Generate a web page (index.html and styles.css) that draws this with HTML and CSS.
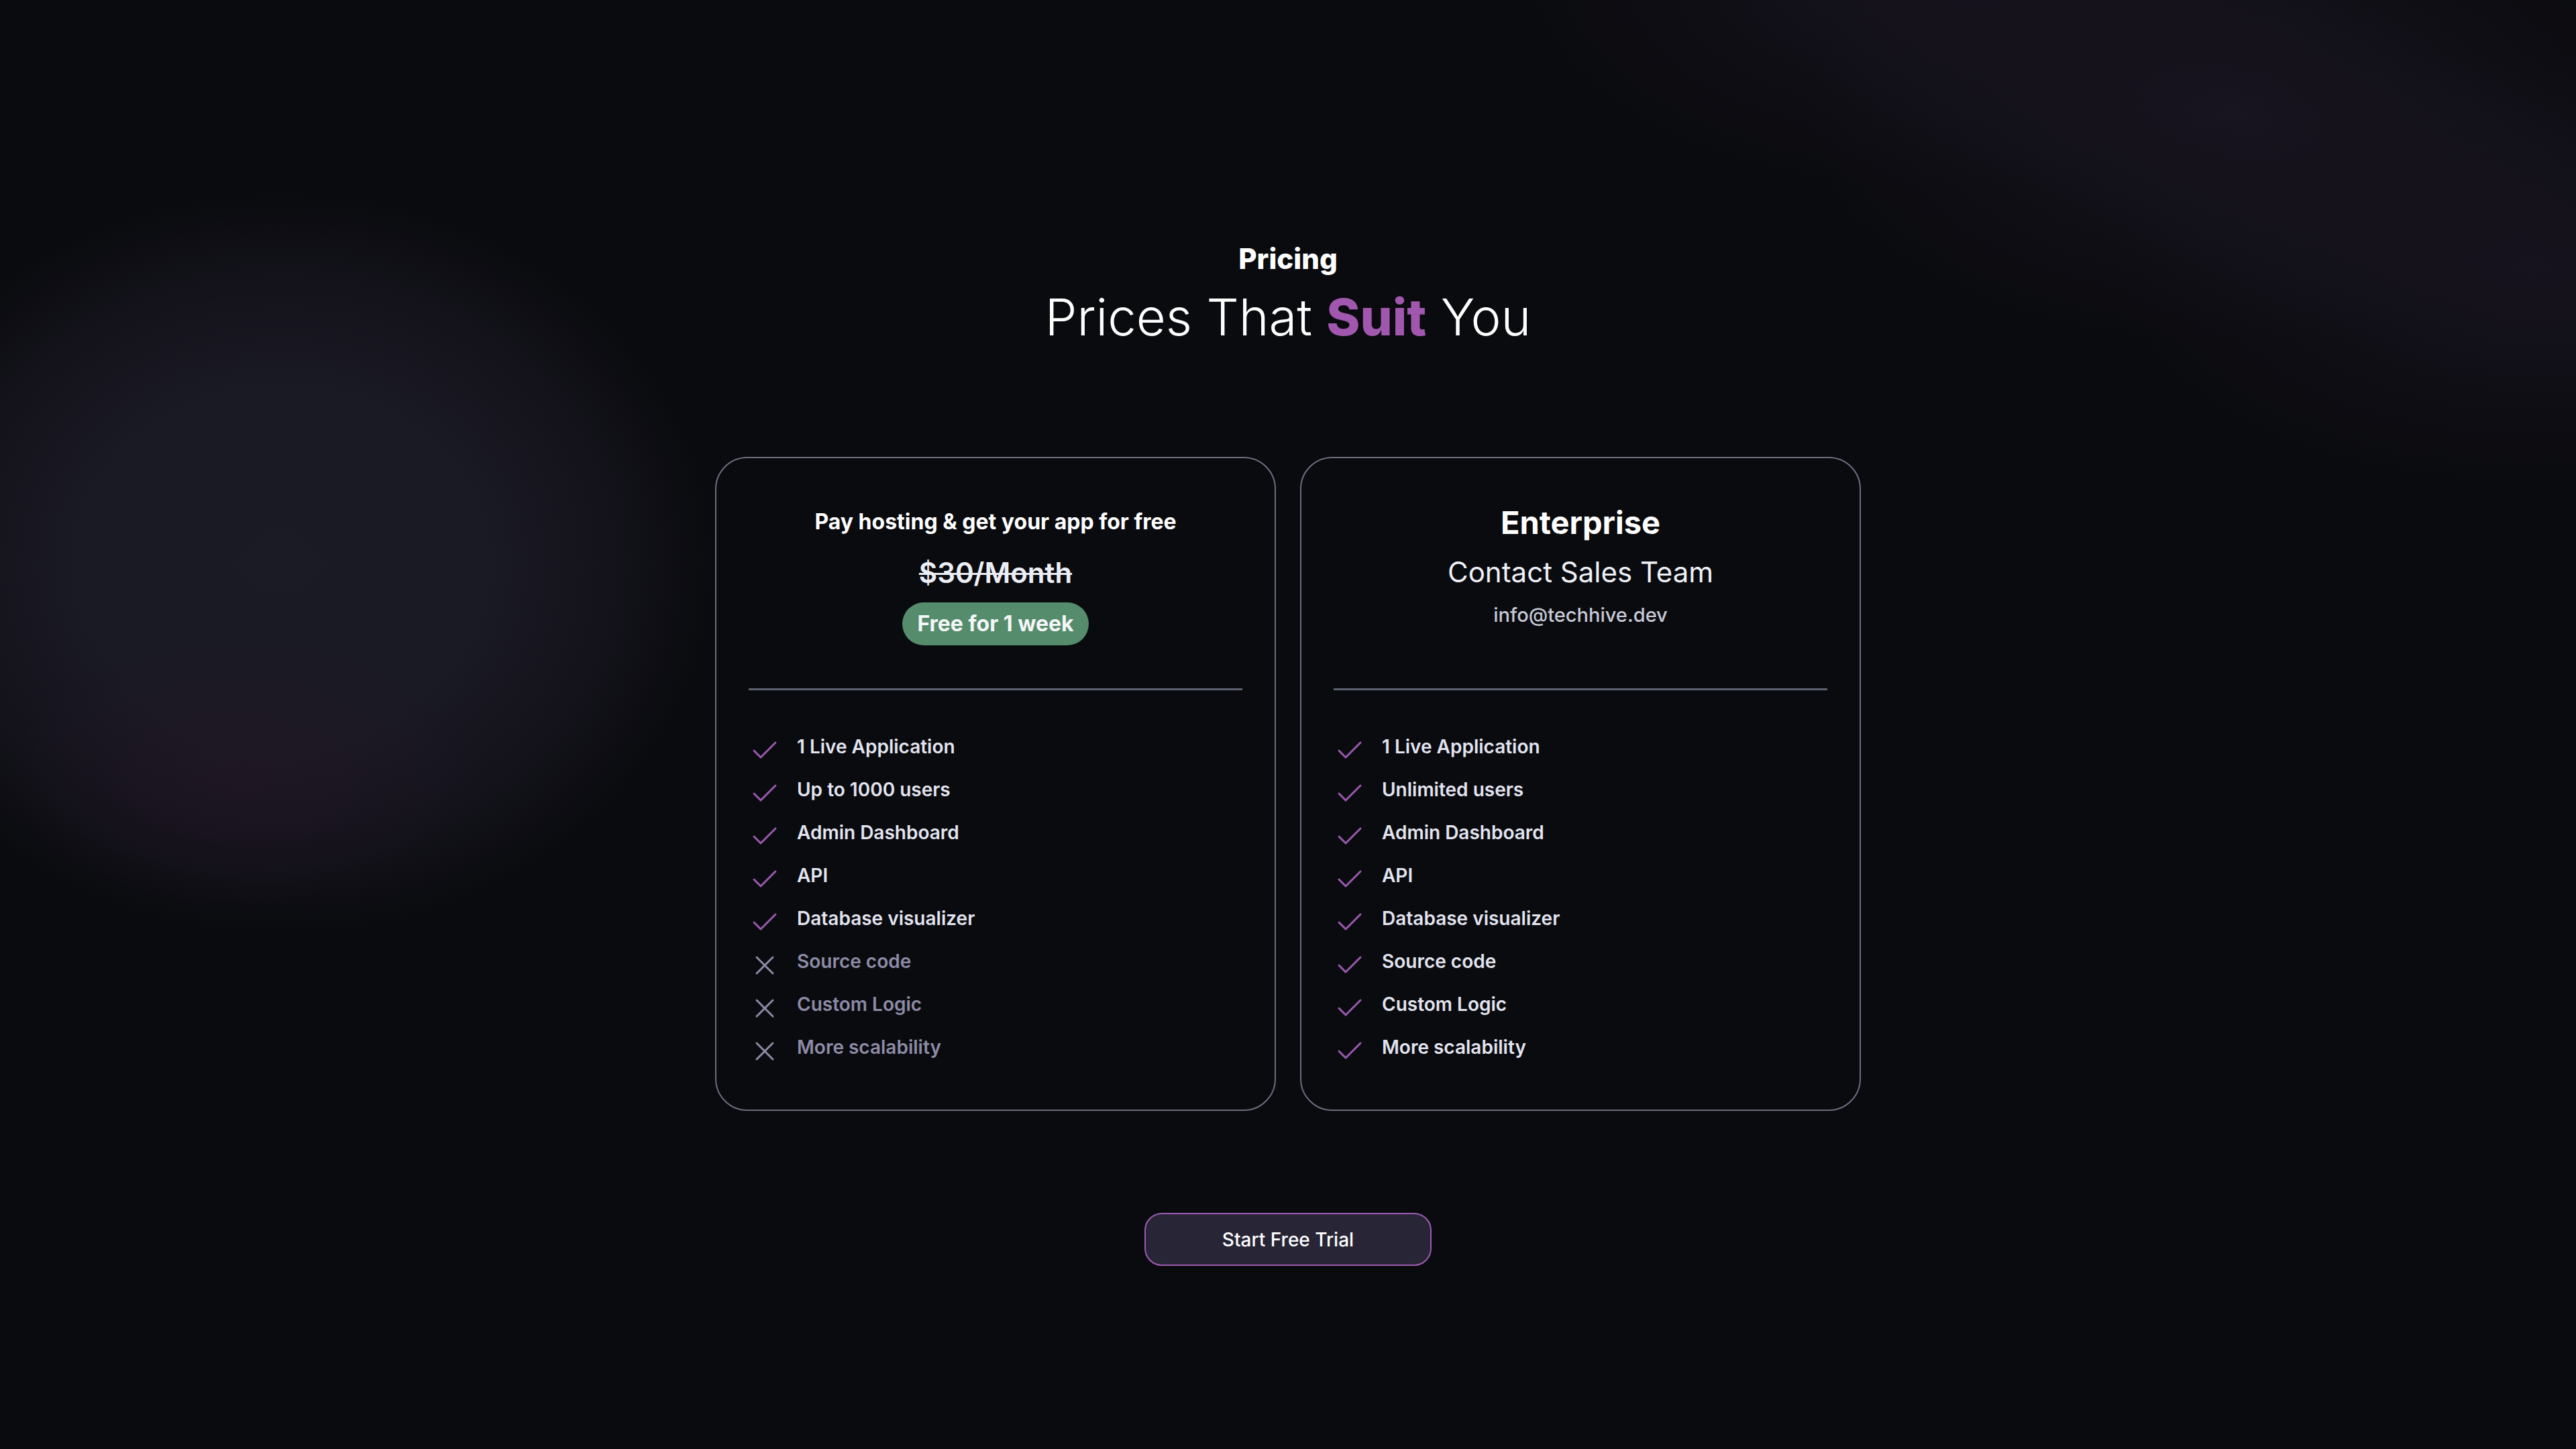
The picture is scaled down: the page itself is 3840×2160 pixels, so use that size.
FILE: index.html
```html
<!DOCTYPE html>
<html lang="en">
<head>
<meta charset="utf-8">
<title>Pricing</title>
<link rel="stylesheet" href="styles.css">
</head>
<body>
<main class="page">
  <header class="intro">
    <p class="eyebrow">Pricing</p>
    <h1 class="headline">Prices That <strong class="accent">Suit</strong> You</h1>
  </header>

  <section class="plans">
    <article class="card">
      <div class="card-head card-head-hosting">
        <h2 class="plan-title">Pay hosting &amp; get your app for free</h2>
        <p class="old-price">$30/Month</p>
        <span class="badge">Free for 1 week</span>
      </div>
      <hr class="divider">
      <ul class="features">
        <li class="feature"><svg class="ico ico-check" viewBox="0 0 24 24"><path d="M20 6 9 17l-5-5"/></svg><span>1 Live Application</span></li>
        <li class="feature"><svg class="ico ico-check" viewBox="0 0 24 24"><path d="M20 6 9 17l-5-5"/></svg><span>Up to 1000 users</span></li>
        <li class="feature"><svg class="ico ico-check" viewBox="0 0 24 24"><path d="M20 6 9 17l-5-5"/></svg><span>Admin Dashboard</span></li>
        <li class="feature"><svg class="ico ico-check" viewBox="0 0 24 24"><path d="M20 6 9 17l-5-5"/></svg><span>API</span></li>
        <li class="feature"><svg class="ico ico-check" viewBox="0 0 24 24"><path d="M20 6 9 17l-5-5"/></svg><span>Database visualizer</span></li>
        <li class="feature off"><svg class="ico ico-x" viewBox="0 0 24 24"><path d="M18 6 6 18M6 6l12 12"/></svg><span>Source code</span></li>
        <li class="feature off"><svg class="ico ico-x" viewBox="0 0 24 24"><path d="M18 6 6 18M6 6l12 12"/></svg><span>Custom Logic</span></li>
        <li class="feature off"><svg class="ico ico-x" viewBox="0 0 24 24"><path d="M18 6 6 18M6 6l12 12"/></svg><span>More scalability</span></li>
      </ul>
    </article>

    <article class="card">
      <div class="card-head card-head-enterprise">
        <h2 class="plan-name">Enterprise</h2>
        <p class="contact">Contact Sales Team</p>
        <p class="email">info@techhive.dev</p>
      </div>
      <hr class="divider">
      <ul class="features">
        <li class="feature"><svg class="ico ico-check" viewBox="0 0 24 24"><path d="M20 6 9 17l-5-5"/></svg><span>1 Live Application</span></li>
        <li class="feature"><svg class="ico ico-check" viewBox="0 0 24 24"><path d="M20 6 9 17l-5-5"/></svg><span>Unlimited users</span></li>
        <li class="feature"><svg class="ico ico-check" viewBox="0 0 24 24"><path d="M20 6 9 17l-5-5"/></svg><span>Admin Dashboard</span></li>
        <li class="feature"><svg class="ico ico-check" viewBox="0 0 24 24"><path d="M20 6 9 17l-5-5"/></svg><span>API</span></li>
        <li class="feature"><svg class="ico ico-check" viewBox="0 0 24 24"><path d="M20 6 9 17l-5-5"/></svg><span>Database visualizer</span></li>
        <li class="feature"><svg class="ico ico-check" viewBox="0 0 24 24"><path d="M20 6 9 17l-5-5"/></svg><span>Source code</span></li>
        <li class="feature"><svg class="ico ico-check" viewBox="0 0 24 24"><path d="M20 6 9 17l-5-5"/></svg><span>Custom Logic</span></li>
        <li class="feature"><svg class="ico ico-check" viewBox="0 0 24 24"><path d="M20 6 9 17l-5-5"/></svg><span>More scalability</span></li>
      </ul>
    </article>
  </section>

  <button class="cta" type="button">Start Free Trial</button>
</main>
</body>
</html>
```

FILE: styles.css
```css
* { box-sizing: border-box; }

html, body {
  margin: 0;
  padding: 0;
}

body {
  min-height: 100vh;
  color: #ffffff;
  font-family: Inter, "Noto Sans", "Liberation Sans", sans-serif;
  overflow: hidden;
  background-color: #0a0b0f;
  background-image:
    radial-gradient(ellipse 340px 200px at 360px 1150px, rgba(38, 20, 38, 0.45), rgba(38, 20, 38, 0)),
    radial-gradient(ellipse 640px 550px at 420px 840px, #1b1b25 0%, #1a1a24 45%, rgba(25, 23, 34, 0.75) 72%, rgba(10, 11, 15, 0) 100%),
    radial-gradient(ellipse 620px 320px at 2900px -40px, rgba(26, 21, 34, 0.8), rgba(10, 11, 15, 0)),
    radial-gradient(ellipse 640px 340px at 3330px 170px, rgba(27, 22, 35, 0.85), rgba(10, 11, 15, 0)),
    radial-gradient(ellipse 620px 320px at 3780px 400px, rgba(26, 21, 34, 0.8), rgba(10, 11, 15, 0));
  background-repeat: no-repeat;
}

.page {
  display: flex;
  flex-direction: column;
  align-items: center;
  padding-top: 362px;
}

.intro {
  text-align: center;
}

.eyebrow {
  margin: 0;
  font-size: 42px;
  line-height: 48px;
  font-weight: 800;
  color: #ffffff;
}

.headline {
  margin: 20px 0 0;
  font-size: 76px;
  line-height: 84px;
  font-weight: 300;
  color: #ffffff;
}

.accent {
  font-weight: 800;
  color: #a157ae;
}

.plans {
  margin-top: 167px;
  display: grid;
  grid-template-columns: 836px 836px;
  gap: 36px;
}

.card {
  border: 2px solid #6a6f7e;
  border-radius: 48px;
  background: #0a0b0f;
  padding: 0 48px 63px;
  display: flex;
  flex-direction: column;
}

.card-head {
  height: 343px;
  display: flex;
  flex-direction: column;
  align-items: center;
  text-align: center;
}

.card-head-hosting { padding-top: 77px; }
.card-head-enterprise { padding-top: 70px; }

.plan-title {
  margin: 0;
  font-size: 32px;
  line-height: 36px;
  font-weight: 700;
  color: #ffffff;
}

.old-price {
  margin: 34px 0 0;
  font-size: 42px;
  line-height: 48px;
  font-weight: 600;
  color: #eceef5;
  text-decoration: line-through;
  text-decoration-thickness: 3px;
}

.badge {
  margin-top: 20px;
  height: 64px;
  padding: 0 22px;
  border-radius: 32px;
  background: #558c6b;
  color: #f4f6f8;
  font-size: 32px;
  font-weight: 700;
  line-height: 64px;
}

.plan-name {
  margin: 0;
  font-size: 47px;
  line-height: 52px;
  font-weight: 700;
  color: #ffffff;
}

.contact {
  margin: 24px 0 0;
  font-size: 42px;
  line-height: 48px;
  font-weight: 400;
  color: #eef0f6;
}

.email {
  margin: 22px 0 0;
  font-size: 29px;
  line-height: 36px;
  font-weight: 500;
  color: #c6c9d6;
}

.divider {
  margin: 0;
  border: 0;
  height: 3px;
  background: #5d6272;
}

.features {
  list-style: none;
  margin: 66px 0 0;
  padding: 0;
  display: flex;
  flex-direction: column;
  gap: 16px;
}

.feature {
  display: flex;
  align-items: flex-start;
  gap: 24px;
  height: 48px;
  font-size: 28px;
  line-height: 36px;
  font-weight: 600;
  color: #e2e4ef;
}

.feature.off {
  color: #8d8ba6;
}

.ico {
  width: 48px;
  height: 48px;
  flex: none;
  fill: none;
  stroke-width: 1.5;
  stroke-linecap: round;
  stroke-linejoin: round;
}

.ico-check { stroke: #9b58b0; }
.ico-x { stroke: #8d8ba6; }

.cta {
  margin-top: 152px;
  width: 428px;
  height: 79px;
  border: 2px solid #9d5cb2;
  border-radius: 26px;
  background: #282536;
  color: #ffffff;
  font-family: Inter, "Noto Sans", "Liberation Sans", sans-serif;
  font-size: 28px;
  font-weight: 500;
  cursor: pointer;
}
```
